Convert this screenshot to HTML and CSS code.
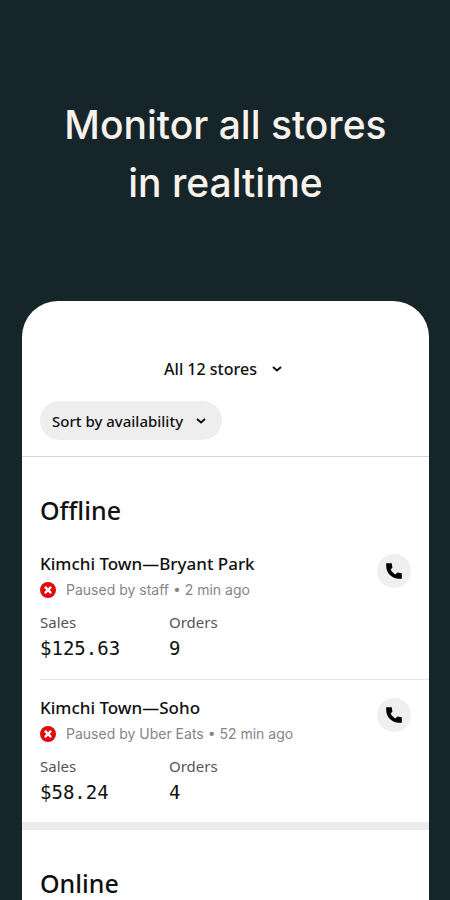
FILE: index.html
```html
<!DOCTYPE html>
<html lang="en">
<head>
<meta charset="utf-8">
<meta name="viewport" content="width=device-width, initial-scale=1">
<title>Monitor all stores in realtime</title>
<link rel="stylesheet" href="styles.css">
</head>
<body>
<svg class="sprite" aria-hidden="true">
  <symbol id="chevron" viewBox="0 0 12 12"><path d="M2 4l4 3.500L10 4" fill="none" stroke="currentColor" stroke-width="2"/></symbol>
  <symbol id="phone" viewBox="0 0 18 18"><path d="M1.200 1.200h5.600l.6 4.600-1.800 1.700c1.100 2.200 2.700 3.800 4.900 4.900l1.700-1.800 4.600.6v5.600H14C7 16.800 1.200 11 1.200 4z" fill="currentColor"/></symbol>
  <symbol id="paused" viewBox="0 0 16 16"><circle cx="8" cy="8" r="8" fill="#e00a0f"/><path d="M4.900 4.900l6.200 6.200M11.100 4.900l-6.200 6.200" stroke="#fff" stroke-width="2.400"/></symbol>
</svg>
<header class="hero">
  <h1>Monitor all stores<br>in realtime</h1>
</header>
<main class="card">
  <div class="toolbar">
    <button class="store-picker" type="button">All 12 stores <svg class="chevron" aria-hidden="true"><use href="#chevron"/></svg></button>
    <button class="sort" type="button">Sort by availability <svg class="chevron" aria-hidden="true"><use href="#chevron"/></svg></button>
  </div>
  <section class="group">
    <h2>Offline</h2>
    <ul class="stores">
      <li class="store">
        <div class="info">
          <h3>Kimchi Town—Bryant Park</h3>
          <p class="status"><svg class="status-icon" aria-hidden="true"><use href="#paused"/></svg>Paused by staff • 2 min ago</p>
          <dl class="stats">
            <div><dt>Sales</dt><dd>$125.63</dd></div>
            <div><dt>Orders</dt><dd>9</dd></div>
          </dl>
        </div>
        <button class="call" type="button" aria-label="Call Kimchi Town—Bryant Park"><svg class="phone" aria-hidden="true"><use href="#phone"/></svg></button>
      </li>
      <li class="store">
        <div class="info">
          <h3>Kimchi Town—Soho</h3>
          <p class="status"><svg class="status-icon" aria-hidden="true"><use href="#paused"/></svg>Paused by Uber Eats • 52 min ago</p>
          <dl class="stats">
            <div><dt>Sales</dt><dd>$58.24</dd></div>
            <div><dt>Orders</dt><dd>4</dd></div>
          </dl>
        </div>
        <button class="call" type="button" aria-label="Call Kimchi Town—Soho"><svg class="phone" aria-hidden="true"><use href="#phone"/></svg></button>
      </li>
    </ul>
  </section>
  <section class="group">
    <h2>Online</h2>
  </section>
</main>
</body>
</html>
```

FILE: styles.css
```css
* {
  box-sizing: border-box;
  margin: 0;
  padding: 0;
}

body {
  display: flex;
  flex-direction: column;
  min-height: 100vh;
  padding: 0 21px 0 22px;
  background: #162529;
  color: #111;
  font-family: "Noto Sans", sans-serif;
}

button {
  border: 0;
  background: none;
  color: inherit;
  font-family: inherit;
  cursor: pointer;
}

.sprite {
  display: none;
}

.hero {
  padding: 96px 0 89px;
  color: #f8f2ec;
  text-align: center;
}

h1 {
  font-family: Inter, sans-serif;
  font-size: 39px;
  font-weight: 500;
  line-height: 58px;
}

.card {
  flex: 1;
  border-radius: 36px 36px 0 0;
  background: #fff;
}

.toolbar {
  display: flex;
  flex-direction: column;
  align-items: flex-start;
  gap: 20px;
  padding: 56px 18px 16px;
  border-bottom: 1px solid #d6d6d6;
}

.store-picker,
.sort {
  display: flex;
  align-items: center;
}

.store-picker {
  align-self: center;
  gap: 14px;
  padding-right: 4px;
  font-size: 16px;
  font-weight: 500;
  line-height: 24px;
}

.sort {
  gap: 12px;
  padding: 10px 15px 9px 12px;
  border-radius: 20px;
  background: #eee;
  font-size: 15px;
  font-weight: 500;
  line-height: 20px;
}

.chevron {
  width: 12px;
  height: 12px;
}

.group {
  padding-top: 37px;
}

.group + .group {
  border-top: 8px solid #ececec;
}

h2 {
  padding: 0 18px;
  font-size: 25px;
  font-weight: 500;
  line-height: 32px;
}

.stores {
  padding-top: 10px;
  list-style: none;
}

.store {
  display: flex;
  justify-content: space-between;
  margin-left: 18px;
  padding: 16px 18px 19px 0;
}

.store + .store {
  padding-bottom: 18px;
  border-top: 1px solid #e4e4e4;
}

h3 {
  font-size: 17px;
  font-weight: 500;
  line-height: 24px;
}

.status {
  display: flex;
  align-items: center;
  gap: 10px;
  margin-top: 4px;
  color: #858585;
  font-family: Inter, sans-serif;
  font-size: 14px;
  line-height: 20px;
}

.status-icon {
  width: 16px;
  height: 16px;
}

.stats {
  display: grid;
  grid-template-columns: 129px auto;
  margin-top: 12px;
}

dt {
  color: #555;
  font-size: 15px;
  line-height: 20px;
}

dd {
  margin-top: 4px;
  font-family: "DejaVu Sans Mono", monospace;
  font-size: 19px;
  line-height: 24px;
}

.call {
  display: grid;
  flex: none;
  place-items: center;
  width: 34px;
  height: 34px;
  margin-top: 2px;
  border-radius: 50%;
  background: #efefef;
  color: #000;
}

.phone {
  width: 18px;
  height: 18px;
}
```
